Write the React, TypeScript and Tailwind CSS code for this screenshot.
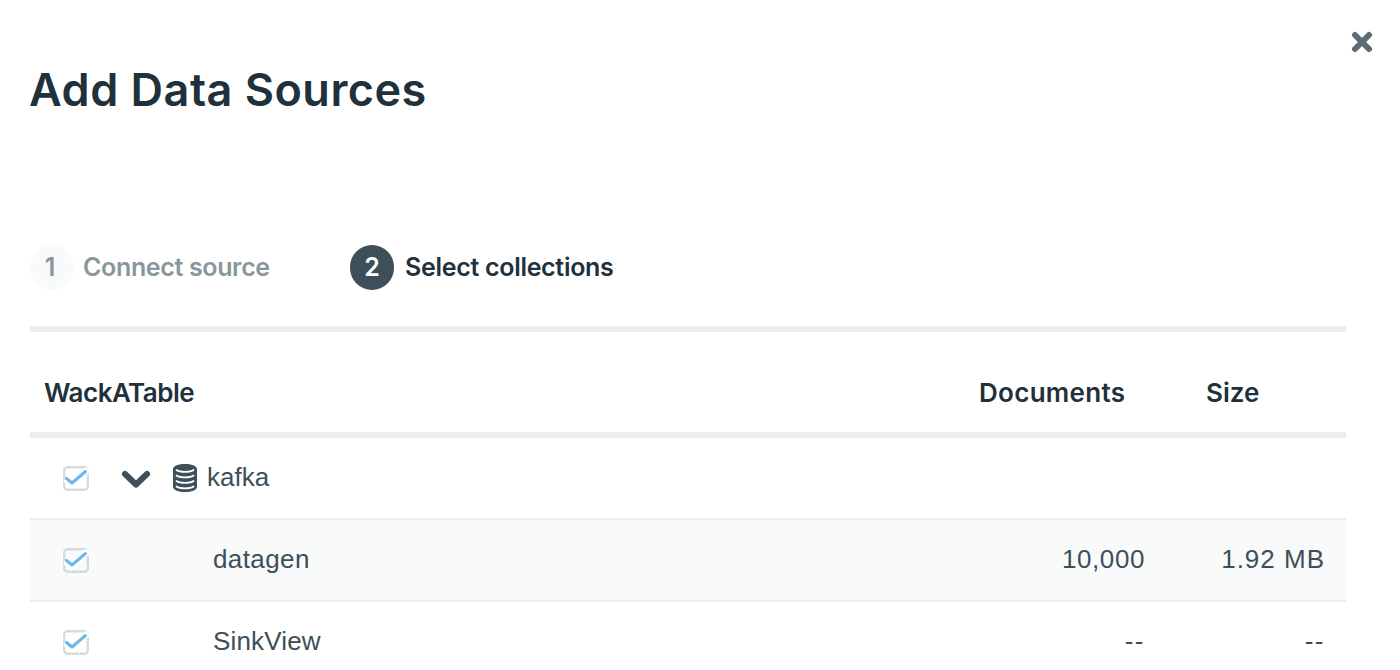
const font = { fontFamily: '"Inter", "Liberation Sans", sans-serif' };
const body = { fontFamily: '"Liberation Sans", Arial, sans-serif' };

function Check() {
  return (
    <svg width="28" height="28" viewBox="0 0 28 28" fill="none" className="block">
      <rect x="3.2" y="2.2" width="23.6" height="22.6" rx="3.5" stroke="#cfd6d7" strokeWidth="2.4" strokeDasharray="2.4 0.4" />
      <path d="M4 14 L11 19.5 L27 4" stroke="#fff" strokeWidth="6.5" />
      <path d="M5.5 13.5 L11 18 L24.5 6.5" stroke="#6bb8e8" strokeWidth="3" strokeLinecap="round" strokeLinejoin="round" />
    </svg>
  );
}

function Row({ name, docs, size, shaded, nameTrack, docTrack, sizeTrack }: { name: string; docs: string; size: string; shaded?: boolean; nameTrack: string; docTrack: string; sizeTrack: string }) {
  return (
    <div className={`flex h-[82px] shrink-0 items-center border-b-2 border-[#e7eeec] text-[26px] text-[#3d4f58] ${shaded ? "bg-[#f9fbfa]" : "bg-white"}`} style={body}>
      <div className="ml-[31px] mt-[2px] w-[152px] shrink-0"><Check /></div>
      <div className={`flex-1 pb-[2px] ${nameTrack}`}>{name}</div>
      <div className={`w-[150px] pb-[2px] pr-[21px] text-right ${docTrack}`}>{docs}</div>
      <div className={`w-[180px] pb-[2px] pr-[21px] text-right ${sizeTrack}`}>{size}</div>
    </div>
  );
}

export default function App() {
  return (
    <div className="relative flex h-[670px] w-[1400px] flex-col overflow-hidden bg-white pl-[30px] pr-[54px]" style={font}>
      <button className="absolute right-[26px] top-[30px]" aria-label="Close">
        <svg width="24" height="24" viewBox="0 0 24 24" className="block">
          <path d="M5 5 L19 19 M19 5 L5 19" stroke="#5d6c74" strokeWidth="6" strokeLinecap="round" />
        </svg>
      </button>

      <h1 className="mt-[60px] -ml-px text-[45px] font-semibold leading-[60px] tracking-[0.5px] text-[#21313c]">Add Data Sources</h1>

      <div className="mt-[125px] flex h-[46px] items-center">
        <div className="flex h-[45px] w-[44px] items-center justify-center rounded-full bg-[#f9fbfa] pr-[4px] text-[25px] font-semibold text-[#89979b]">1</div>
        <div className="ml-[9px] w-[267px] text-[25px] font-semibold tracking-[-0.35px] text-[#89979b]">Connect source</div>
        <div className="flex h-[45px] w-[44px] items-center justify-center rounded-full bg-[#3d4f58] text-[25px] font-semibold text-white">2</div>
        <div className="ml-[11px] text-[25px] font-semibold tracking-[-0.3px] text-[#21313c]">Select collections</div>
      </div>

      <div className="mt-[36px] h-[6px] shrink-0 bg-[#e7eeec]" />

      <div className="flex h-[100px] shrink-0 items-center pt-[20px] text-[26px] font-semibold text-[#21313c]">
        <div className="flex-1 pl-[14px] tracking-[-0.5px]">WackATable</div>
        <div className="w-[227px] tracking-[0.3px]">Documents</div>
        <div className="w-[140px]">Size</div>
      </div>

      <div className="h-[6px] shrink-0 bg-[#e7eeec]" />

      <div className="flex h-[82px] shrink-0 items-center border-b-2 border-[#e7eeec] text-[26px] text-[#3d4f58]" style={body}>
        <div className="ml-[31px] mt-[2px] w-[60px] shrink-0"><Check /></div>
        <svg width="30" height="22" viewBox="0 0 30 22" className="mt-[2px] shrink-0">
          <path d="M4 6 L15 16.5 L26 6" fill="none" stroke="#3d4f58" strokeWidth="6" strokeLinecap="round" strokeLinejoin="round" />
        </svg>
        <svg width="26" height="30" viewBox="0 0 26 30" className="ml-[21px] shrink-0">
          <path d="M1 6.5 C1 2.5 7 1 13 1 C19 1 25 2.5 25 6.5 V23.5 C25 27.5 19 29 13 29 C7 29 1 27.5 1 23.5 Z" fill="#3d4f58" />
          <path d="M4.5 7 C8 9.5 18 9.5 21.5 7 M4.5 12.5 C8 15 18 15 21.5 12.5 M4.5 18 C8 20.5 18 20.5 21.5 18 M4.5 23.5 C8 26 18 26 21.5 23.5" fill="none" stroke="#fff" strokeWidth="1.8" strokeLinecap="round" />
        </svg>
        <div className="ml-[9px] pb-[2px]">kafka</div>
      </div>

      <Row name="datagen" docs="10,000" size="1.92 MB" shaded nameTrack="tracking-[0.4px]" docTrack="tracking-[0.6px]" sizeTrack="tracking-[1px]" />
      <Row name="SinkView" docs="--" size="--" nameTrack="tracking-[0.15px]" docTrack="tracking-[1.5px]" sizeTrack="tracking-[1.5px]" />
    </div>
  );
}
